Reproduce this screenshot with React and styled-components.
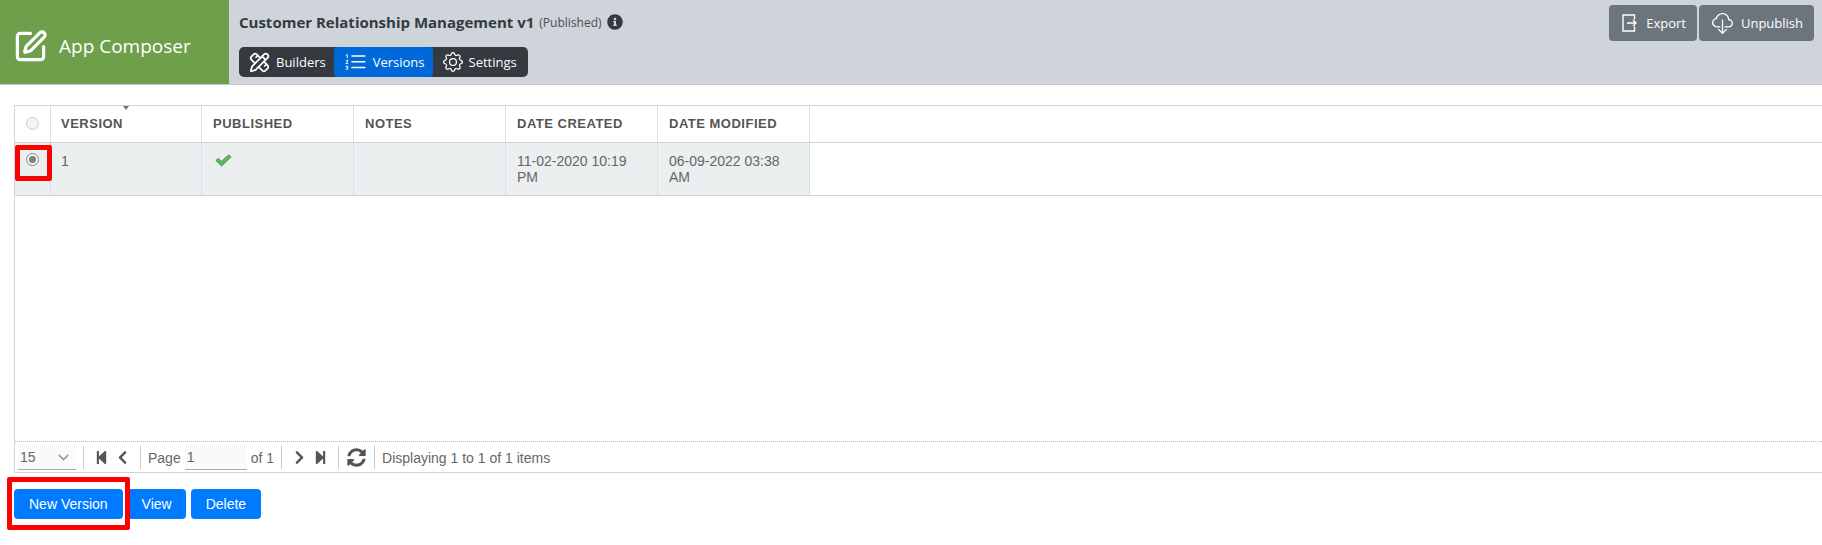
import React from "react";
import styled, { createGlobalStyle } from "styled-components";
import { FaChevronLeft, FaChevronRight, FaInfoCircle, FaStepBackward, FaStepForward, FaSyncAlt } from "react-icons/fa";
import { BsCloudDownload, BsGear, BsListOl } from "react-icons/bs";
import { LuChevronDown, LuPencilRuler, LuSquarePen } from "react-icons/lu";

const GlobalStyle = createGlobalStyle`
  html, body { margin: 0; padding: 0; background: #fff; }
  body { font-family: "Open Sans", "Liberation Sans", sans-serif; }
  * { box-sizing: border-box; }
`;

const Page = styled.div`
  width: 1822px;
  height: 545px;
  overflow: hidden;
  display: flex;
  flex-direction: column;
`;

const Header = styled.header`
  height: 85px;
  display: flex;
  background: #ced4da;
  border-bottom: 1px solid #c6cbd0;
`;

const Brand = styled.div`
  width: 229px;
  display: flex;
  align-items: center;
  gap: 11px;
  padding: 8px 0 0 13px;
  background: #6ea04b;
  color: #fff;
  font-size: 19px;
`;

const TitleArea = styled.div`
  flex: 1;
  padding: 12px 0 0 10px;
`;

const Title = styled.div`
  display: flex;
  align-items: center;
  gap: 5px;
  height: 20px;
  color: #343a40;
  font-size: 15px;
  font-weight: 700;
`;

const Status = styled.span`
  font-size: 12px;
  font-weight: 400;
  color: #495057;
`;

const Tabs = styled.div`
  display: inline-flex;
  margin-top: 15px;
  height: 30px;
  background: #343a40;
  border-radius: 5px;
`;

const Tab = styled.div`
  display: flex;
  align-items: center;
  gap: 6px;
  padding: 0 8px 0 10px;
  border-radius: 4px;
  color: #fff;
  font-size: 13px;
  background: ${(props) => (props.active ? "#0069d9" : "transparent")};
  &:last-child { padding-right: 11px; }
`;

const Actions = styled.div`
  display: flex;
  gap: 2px;
  padding: 5px 8px 0 0;
`;

const ActionButton = styled.div`
  display: flex;
  align-items: center;
  gap: 8px;
  height: 36px;
  padding: 0 11px 0 13px;
  border-radius: 4px;
  background: #6c757d;
  color: #fff;
  font-size: 13px;
`;

const Content = styled.main`
  flex: 1;
  padding: 20px 0 0 14px;
  font-family: "Liberation Sans", Arial, sans-serif;
  position: relative;
`;

const Grid = styled.div`
  height: 368px;
  display: flex;
  flex-direction: column;
  border: 1px solid #d3d3d3;
  border-right: 0;
`;

const Row = styled.div`
  display: flex;
  height: ${(props) => props.height}px;
  flex-shrink: 0;
  border-bottom: 1px solid #d0d4d6;
`;

const HeadCell = styled.div`
  position: relative;
  width: ${(props) => props.width}px;
  display: flex;
  align-items: center;
  padding-left: ${(props) => props.pad}px;
  padding-bottom: 1px;
  justify-content: ${(props) => (props.center ? "center" : "flex-start")};
  border-right: 1px solid #dde1e4;
  color: #555;
  font-size: 13px;
  font-weight: 700;
  letter-spacing: 0.5px;
`;

const BodyRow = styled(Row)`
  > div:not(:last-child) { background: #ebeff0; }
`;

const Cell = styled.div`
  width: ${(props) => props.width}px;
  padding: 10px 18px 0 ${(props) => props.pad}px;
  display: ${(props) => (props.center ? "flex" : "block")};
  justify-content: center;
  border-right: 1px solid #d5e0e8;
  color: #666;
  font-size: 14px;
  line-height: 16px;
`;

const RadioCell = styled(Cell)`
  padding: 10px 0 0;
`;

const Radio = styled.span`
  width: 13px;
  height: 13px;
  display: flex;
  align-items: center;
  justify-content: center;
  border-radius: 50%;
  border: 1px solid ${(props) => (props.checked ? "#888" : "#ccc")};
  background: #f4f4f4;
  &::after {
    content: "";
    width: 7px;
    height: 7px;
    border-radius: 50%;
    background: ${(props) => (props.checked ? "#808080" : "transparent")};
  }
`;

const SortMark = styled.span`
  position: absolute;
  top: 0;
  left: 72px;
  border: 3px solid transparent;
  border-top: 4px solid #777;
  border-bottom: 0;
`;

const CheckWrap = styled.div`
  padding: 1px 0 0 2px;
`;

const Spacer = styled.div`
  flex: 1;
`;

const Pager = styled.div`
  height: 31px;
  display: flex;
  align-items: center;
  padding: 1px 0 0 3px;
  border-top: 1px dotted #bbb;
  color: #666;
  font-size: 14px;
`;

const PageSize = styled.div`
  width: 58px;
  height: 25px;
  display: flex;
  align-items: center;
  justify-content: space-between;
  padding: 0 4px 0 2px;
  background: #fafafa;
  border-bottom: 1px solid #aaa;
  color: #666;
`;

const Divider = styled.span`
  width: 1px;
  height: 23px;
  margin: 0 7px;
  background: #ccc;
`;

const PagerIcon = styled.span`
  display: flex;
  align-items: center;
  justify-content: center;
  width: 21px;
  color: #555;
`;

const PageInput = styled.div`
  width: 62px;
  height: 25px;
  margin: 0 4px;
  padding: 4px 2px 0;
  background: #fafafa;
  border-bottom: 1px solid #aaa;
`;

const ButtonRow = styled.div`
  display: flex;
  gap: 5px;
  padding-top: 16px;
`;

const Button = styled.div`
  height: 30px;
  display: flex;
  align-items: center;
  padding: 0 ${(props) => (props.tight ? 14 : 15)}px;
  background: #007bff;
  border-radius: 4px;
  color: #fff;
  font-size: 14px;
`;

const Highlight = styled.div`
  position: absolute;
  left: ${(props) => props.left}px;
  top: ${(props) => props.top}px;
  width: ${(props) => props.width}px;
  height: ${(props) => props.height}px;
  border: 5px solid #f00;
  border-radius: 2px;
`;

function ExportIcon() {
  return (
    <svg width="16" height="18" viewBox="0 0 16 18" fill="none" stroke="#fff">
      <path d="M12.5 5.5V1H1v16h11.5v-4.5" strokeWidth="1.4" />
      <path d="M5 9h9M11 6l3 3-3 3" strokeWidth="1.4" />
    </svg>
  );
}

function CheckIcon() {
  return (
    <svg width="17" height="13" viewBox="0 0 17 13">
      <path d="M0.8 6.5 3.4 4.2 6.4 7.2 13.8 0.8 16.2 3 6.5 12.2Z" fill="#62b562" stroke="#4c9a4c" strokeWidth="0.8" />
    </svg>
  );
}

const columns = [
  { label: "VERSION", width: 151, pad: 10 },
  { label: "PUBLISHED", width: 152, pad: 11 },
  { label: "NOTES", width: 152, pad: 11 },
  { label: "DATE CREATED", width: 152, pad: 11 },
  { label: "DATE MODIFIED", width: 152, pad: 11 },
];

const App = () => {
  return (
    <Page>
      <GlobalStyle />
      <Header>
        <Brand>
          <LuSquarePen size={35} strokeWidth={2.2} />
          App Composer
        </Brand>
        <TitleArea>
          <Title>
            Customer Relationship Management v1 <Status>(Published)</Status> <FaInfoCircle size={16} />
          </Title>
          <Tabs>
            <Tab><LuPencilRuler size={21} /> Builders</Tab>
            <Tab active><BsListOl size={23} /> Versions</Tab>
            <Tab><BsGear size={20} /> Settings</Tab>
          </Tabs>
        </TitleArea>
        <Actions>
          <ActionButton><ExportIcon /> Export</ActionButton>
          <ActionButton><BsCloudDownload size={21} /> Unpublish</ActionButton>
        </Actions>
      </Header>
      <Content>
        <Grid>
          <Row height={37}>
            <HeadCell width={36} center pad={0}><Radio /></HeadCell>
            {columns.map((col, i) => (
              <HeadCell key={col.label} width={col.width} pad={col.pad}>
                {i === 0 && <SortMark />}
                {col.label}
              </HeadCell>
            ))}
          </Row>
          <BodyRow height={53}>
            <RadioCell width={36} center><Radio checked /></RadioCell>
            <Cell width={151} pad={10}>1</Cell>
            <Cell width={152} pad={11}><CheckWrap><CheckIcon /></CheckWrap></Cell>
            <Cell width={152} pad={11} />
            <Cell width={152} pad={11}>11-02-2020 10:19 PM</Cell>
            <Cell width={152} pad={11}>06-09-2022 03:38 AM</Cell>
            <Spacer />
          </BodyRow>
          <Spacer />
          <Pager>
            <PageSize>15 <LuChevronDown size={17} color="#999" /></PageSize>
            <Divider />
            <PagerIcon><FaStepBackward size={15} /></PagerIcon>
            <PagerIcon><FaChevronLeft size={15} /></PagerIcon>
            <Divider />
            Page
            <PageInput>1</PageInput>
            of 1
            <Divider />
            <PagerIcon><FaChevronRight size={15} /></PagerIcon>
            <PagerIcon><FaStepForward size={15} /></PagerIcon>
            <Divider />
            <PagerIcon><FaSyncAlt size={19} /></PagerIcon>
            <Divider />
            Displaying 1 to 1 of 1 items
          </Pager>
        </Grid>
        <ButtonRow>
          <Button>New Version</Button>
          <Button tight>View</Button>
          <Button>Delete</Button>
        </ButtonRow>
        <Highlight left={15} top={60} width={37} height={36} />
        <Highlight left={7} top={392} width={123} height={53} />
      </Content>
    </Page>
  );
};

export default App;
